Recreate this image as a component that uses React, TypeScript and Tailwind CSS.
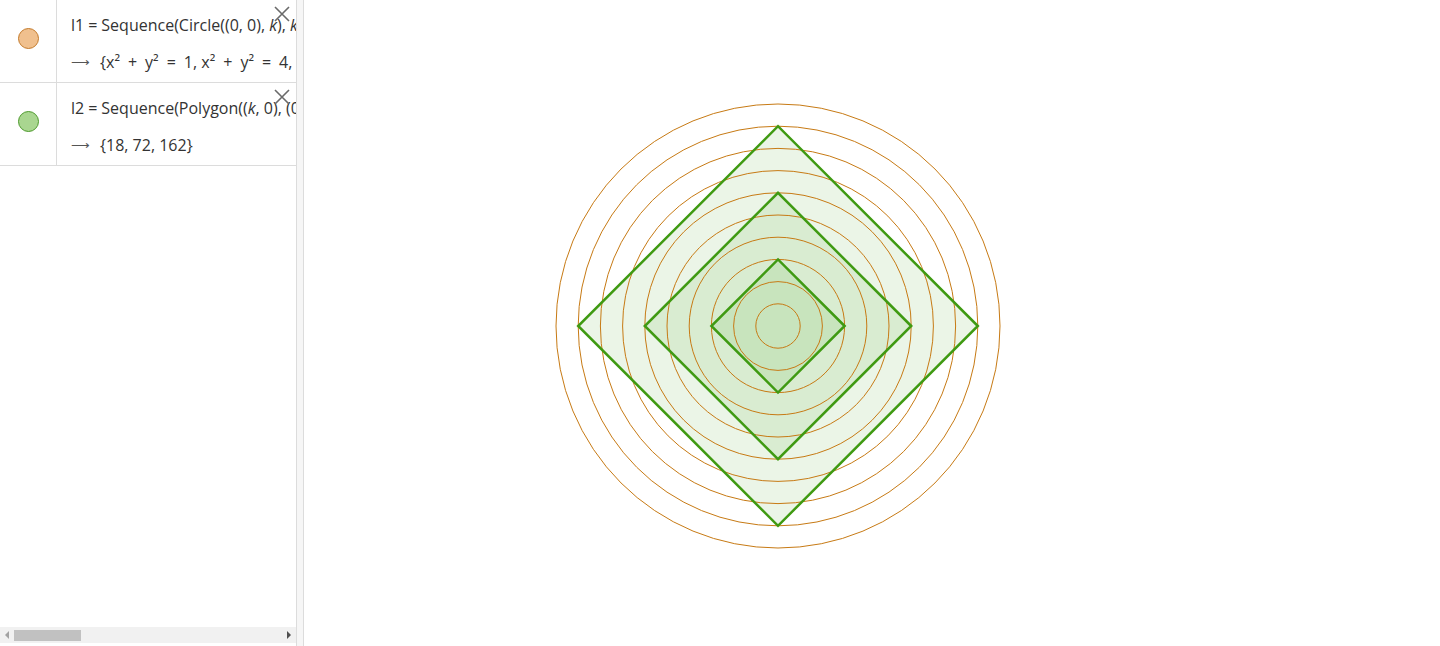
const font = { fontFamily: '"Open Sans", Lato, sans-serif' }

const UNIT = 22.2
const CX = 474
const CY = 326

function Op({ c }: { c: string }) {
  return <span className="mx-[8px]">{c}</span>
}

function Row({
  dot,
  ring,
  def,
  value,
}: {
  dot: string
  ring: string
  def: React.ReactNode
  value: React.ReactNode
}) {
  return (
    <div className="relative flex h-[83px] border-b border-[#dcdcdc]">
      <div className="flex w-[57px] shrink-0 justify-center border-r border-[#dcdcdc] pt-[28px]">
        <div className={`h-[21px] w-[21px] rounded-full border ${dot} ${ring}`} />
      </div>
      <div className="min-w-0 flex-1 overflow-hidden pl-[14px] pt-[14px] text-[16px] text-[#333]">
        <div className="h-[22px] whitespace-nowrap leading-[22px]">{def}</div>
        <div className="mt-[15px] flex h-[22px] items-center whitespace-nowrap leading-[22px]">
          <span className="mr-[10px] text-[13px] text-[#555]">⟶</span>
          {value}
        </div>
      </div>
      <svg
        className="absolute right-[6px] top-[6px]"
        width="16"
        height="16"
        viewBox="0 0 16 16"
      >
        <path d="M1 1L15 15M15 1L1 15" stroke="#6a6a6a" strokeWidth="1.6" />
      </svg>
    </div>
  )
}

export default function App() {
  const rings = Array.from({ length: 10 }, (_, i) => i + 1)
  const squares = [3, 6, 9]

  return (
    <div className="flex h-[646px] w-[1440px] overflow-hidden bg-white" style={font}>
      <div className="flex w-[297px] shrink-0 flex-col border-r border-[#dcdcdc]">
        <Row
          dot="bg-[#f0c08e]"
          ring="border-[#c47a2a]"
          def={
            <>
              l1<span className="mx-[4px]">=</span>Sequence(Circle((0, 0), <i>k</i>), <i>k</i>, 1, 10)
            </>
          }
          value={
            <>
              {'{'}x²<Op c="+" />y²<Op c="=" />1, x²<Op c="+" />y²<Op c="=" />4, x²<Op c="+" />y²
              <Op c="=" />9
            </>
          }
        />
        <Row
          dot="bg-[#a9d690]"
          ring="border-[#4d9a2c]"
          def={
            <>
              l2<span className="mx-[4px]">=</span>Sequence(Polygon((<i>k</i>, 0), (0, <i>k</i>), (−<i>k</i>, 0)))
            </>
          }
          value={<>{'{'}18, 72, 162{'}'}</>}
        />
        <div className="flex-1" />
        <div className="mb-[3px] flex h-[16px] items-center bg-[#f1f1f1]">
          <div className="flex w-[14px] justify-center">
            <div className="h-0 w-0 border-y-[4px] border-r-[4px] border-y-transparent border-r-[#a3a3a3]" />
          </div>
          <div className="h-[11px] w-[67px] bg-[#c1c1c1]" />
          <div className="flex-1" />
          <div className="flex w-[14px] justify-center">
            <div className="h-0 w-0 border-y-[4px] border-l-[4px] border-y-transparent border-l-[#505050]" />
          </div>
        </div>
      </div>
      <div className="w-[7px] shrink-0 border-r border-[#dcdcdc] bg-[#f6f6f6]" />
      <div className="flex-1">
        <svg width="1136" height="646" viewBox="0 0 1136 646">
          {squares.map((k) => {
            const r = k * UNIT
            return (
              <polygon
                key={k}
                points={`${CX + r},${CY} ${CX},${CY - r} ${CX - r},${CY} ${CX},${CY + r}`}
                fill="rgba(61,154,16,0.1)"
                stroke="none"
              />
            )
          })}
          {rings.map((k) => (
            <circle
              key={k}
              cx={CX}
              cy={CY}
              r={k * UNIT}
              fill="none"
              stroke="#c77a14"
              strokeWidth={1}
            />
          ))}
          {squares.map((k) => {
            const r = k * UNIT
            return (
              <polygon
                key={k}
                points={`${CX + r},${CY} ${CX},${CY - r} ${CX - r},${CY} ${CX},${CY + r}`}
                fill="none"
                stroke="#3f9a12"
                strokeWidth={2.5}
              />
            )
          })}
        </svg>
      </div>
    </div>
  )
}
